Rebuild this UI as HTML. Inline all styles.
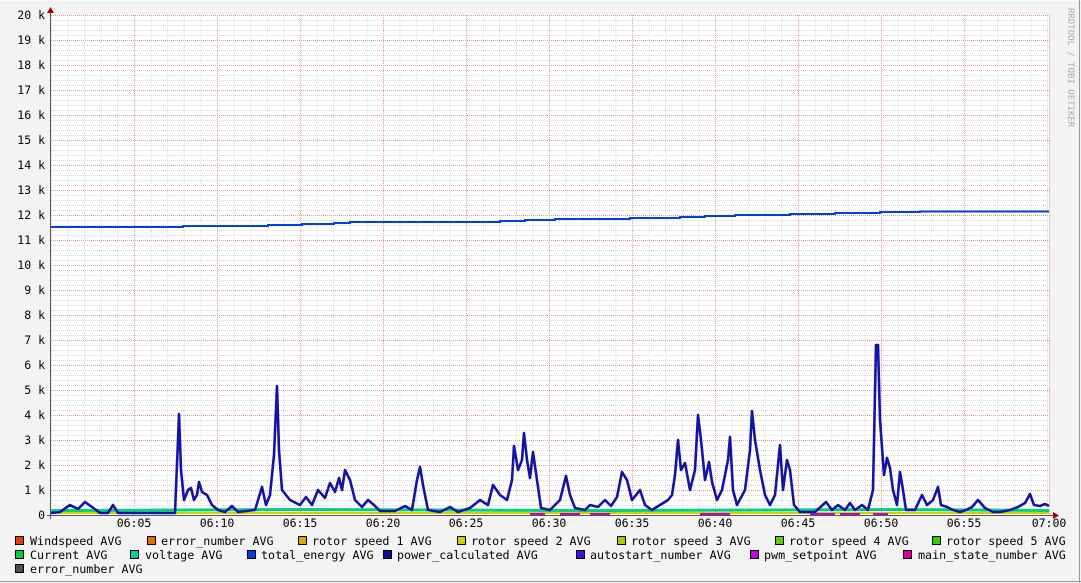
<!DOCTYPE html>
<html><head><meta charset="utf-8"><style>
html,body{margin:0;padding:0;background:#f3f3f3;}
svg{display:block;font-family:"DejaVu Sans Mono","Liberation Mono",monospace;}
</style></head><body>
<svg width="1081" height="583" xmlns="http://www.w3.org/2000/svg" shape-rendering="crispEdges">
<defs>
<pattern id="minH" x="51" y="15" width="2" height="5" patternUnits="userSpaceOnUse"><rect x="0" y="0" width="1" height="1" fill="#d8d8d8"/></pattern>
<pattern id="minV" x="51" y="15" width="16.6" height="2" patternUnits="userSpaceOnUse"><rect x="0" y="0" width="1" height="1" fill="#d8d8d8"/></pattern>
</defs>
<rect x="0" y="0" width="1081" height="583" fill="#f3f3f3"/>
<line x1="0" y1="0.5" x2="1081" y2="0.5" stroke="#fcfcfc"/>
<line x1="1079.5" y1="0" x2="1079.5" y2="583" stroke="#999"/>
<line x1="0" y1="581.5" x2="1081" y2="581.5" stroke="#999"/>
<rect x="51" y="15" width="998" height="500" fill="#fff"/>
<rect x="51" y="15" width="998" height="500" fill="url(#minH)"/>
<rect x="51" y="15" width="998" height="500" fill="url(#minV)"/>
<path stroke="#e49a9a" stroke-dasharray="1,1" fill="none" d="M51,15.5H1050M51,40.5H1050M51,65.5H1050M51,90.5H1050M51,115.5H1050M51,140.5H1050M51,165.5H1050M51,190.5H1050M51,215.5H1050M51,240.5H1050M51,265.5H1050M51,290.5H1050M51,315.5H1050M51,340.5H1050M51,365.5H1050M51,390.5H1050M51,415.5H1050M51,440.5H1050M51,465.5H1050M51,490.5H1050"/>
<path stroke="#e49a9a" stroke-dasharray="1,1" fill="none" d="M134.5,15V515M217.5,15V515M300.5,15V515M383.5,15V515M466.5,15V515M549.5,15V515M632.5,15V515M715.5,15V515M798.5,15V515M881.5,15V515M964.5,15V515M1049.5,15V515"/>
<g font-size="11.5" fill="#000" text-anchor="end" shape-rendering="auto">
<text x="45" y="19">20 k</text><text x="45" y="44">19 k</text><text x="45" y="69">18 k</text><text x="45" y="94">17 k</text><text x="45" y="119">16 k</text><text x="45" y="144">15 k</text><text x="45" y="169">14 k</text><text x="45" y="194">13 k</text><text x="45" y="219">12 k</text><text x="45" y="244">11 k</text><text x="45" y="269">10 k</text><text x="45" y="294">9 k</text><text x="45" y="319">8 k</text><text x="45" y="344">7 k</text><text x="45" y="369">6 k</text><text x="45" y="394">5 k</text><text x="45" y="419">4 k</text><text x="45" y="444">3 k</text><text x="45" y="469">2 k</text><text x="45" y="494">1 k</text><text x="45" y="519">0</text>
</g>
<g font-size="11.5" fill="#000" text-anchor="middle">
<text x="134" y="527">06:05</text><text x="217" y="527">06:10</text><text x="300" y="527">06:15</text><text x="383" y="527">06:20</text><text x="466" y="527">06:25</text><text x="549" y="527">06:30</text><text x="632" y="527">06:35</text><text x="715" y="527">06:40</text><text x="798" y="527">06:45</text><text x="881" y="527">06:50</text><text x="964" y="527">06:55</text><text x="1049" y="527">07:00</text>
</g>
<text x="1068" y="8" font-size="9" fill="#aaa" transform="rotate(90 1068 8)">RRDTOOL / TOBI OETIKER</text>
<g shape-rendering="auto">
<polyline points="51,513 1049,513" stroke="#d0d000" stroke-width="2" fill="none"/>
<polyline points="51,511 300,510 600,511 900,510 1049,511" stroke="#00d040" stroke-width="2" fill="none"/>
<polyline points="51,510 300,509 600,510 900,509 1049,510" stroke="#00d0a0" stroke-width="2" fill="none"/>
<path d="M530,514h15M560,514h20M590,514h20M700,514h30M810,514h25M840,514h20M873,514h15" stroke="#c000e0" stroke-width="2"/>
<path d="M51,227H183V226H268V225H302V224H334V223H350V222H500V221H525V220H555V219H630V218H680V217H705V216H735V215H790V214H835V213H880V212H920V211.5H1049" stroke="#0040e0" stroke-width="2" fill="none" shape-rendering="crispEdges"/>
<path d="M51,513 L60,512 L70,505 L78,509 L85,502 L92,507 L100,513 L108,513 L113,505 L118,513 L175,513 L178,440 L179,414 L181,470 L184,500 L188,490 L191,488 L194,500 L197,495 L199,482 L202,492 L207,495 L212,505 L218,510 L225,512 L232,506 L238,512 L255,510 L262,487 L266,505 L270,495 L274,455 L277,386 L279,450 L282,490 L290,500 L300,505 L306,497 L312,505 L318,490 L325,498 L330,483 L335,492 L339,478 L342,490 L345,470 L350,480 L355,500 L362,507 L368,500 L374,505 L380,511 L395,511 L405,506 L412,510 L417,480 L420,467 L423,485 L428,510 L440,512 L450,507 L458,512 L470,508 L480,500 L488,505 L493,485 L500,495 L507,500 L512,480 L514,446 L518,470 L522,460 L524,433 L527,460 L530,478 L533,452 L537,480 L541,508 L550,510 L560,500 L566,476 L570,495 L575,508 L585,510 L590,505 L598,507 L605,500 L611,506 L617,497 L622,472 L627,480 L632,500 L640,490 L645,505 L652,510 L660,505 L668,500 L672,495 L675,475 L678,440 L681,470 L685,463 L690,490 L695,470 L698,415 L701,440 L705,480 L709,462 L712,482 L717,500 L722,490 L728,460 L730,437 L733,490 L737,505 L745,490 L750,450 L752,411 L755,440 L760,470 L765,495 L770,505 L775,495 L780,445 L783,490 L787,460 L790,470 L794,505 L800,512 L815,512 L826,502 L832,510 L838,505 L845,510 L850,503 L855,510 L862,505 L868,510 L873,490 L876,345 L878,345 L880,420 L884,475 L887,458 L890,468 L893,490 L897,505 L900,472 L903,490 L906,510 L915,510 L922,495 L927,505 L933,500 L938,487 L941,505 L947,507 L953,510 L960,512 L966,510 L972,507 L978,500 L985,508 L993,512 L1000,512 L1010,510 L1018,507 L1025,503 L1030,494 L1034,505 L1040,506 L1045,504 L1049,506" stroke="#1414a4" stroke-width="2.6" fill="none" stroke-linejoin="round"/>
</g>
<line x1="50.5" y1="10" x2="50.5" y2="519" stroke="#555"/>
<line x1="47" y1="515.5" x2="1054" y2="515.5" stroke="#555"/>
<polygon points="47,13 54,13 50.5,7" fill="#a00" shape-rendering="auto"/>
<polygon points="1053,512 1053,519 1059,515.5" fill="#a00" shape-rendering="auto"/>
<g font-size="11.7" fill="#000">
<g stroke="#000" stroke-width="1">
<rect x="15.5" y="536.5" width="8" height="8" fill="#e0400f"/>
<rect x="147.5" y="536.5" width="8" height="8" fill="#e07000"/>
<rect x="298.5" y="536.5" width="8" height="8" fill="#e0a800"/>
<rect x="457.5" y="536.5" width="8" height="8" fill="#d0d000"/>
<rect x="617.5" y="536.5" width="8" height="8" fill="#a0d000"/>
<rect x="775.5" y="536.5" width="8" height="8" fill="#60d000"/>
<rect x="932.5" y="536.5" width="8" height="8" fill="#30d000"/>
<rect x="15.5" y="550.5" width="8" height="8" fill="#00d040"/>
<rect x="130.5" y="550.5" width="8" height="8" fill="#00d0a0"/>
<rect x="247.5" y="550.5" width="8" height="8" fill="#0040e0"/>
<rect x="383.5" y="550.5" width="8" height="8" fill="#101090"/>
<rect x="576.5" y="550.5" width="8" height="8" fill="#4010e0"/>
<rect x="750.5" y="550.5" width="8" height="8" fill="#c000e0"/>
<rect x="903.5" y="550.5" width="8" height="8" fill="#e000a0"/>
<rect x="15.5" y="564.5" width="8" height="8" fill="#505050"/>
</g>
<text x="30" y="545">Windspeed AVG</text>
<text x="161" y="545">error_number AVG</text>
<text x="312" y="545">rotor speed 1 AVG</text>
<text x="471" y="545">rotor speed 2 AVG</text>
<text x="631" y="545">rotor speed 3 AVG</text>
<text x="789" y="545">rotor speed 4 AVG</text>
<text x="946" y="545">rotor speed 5 AVG</text>
<text x="30" y="559">Current AVG</text>
<text x="145" y="559">voltage AVG</text>
<text x="261" y="559">total_energy AVG</text>
<text x="397" y="559">power_calculated AVG</text>
<text x="590" y="559">autostart_number AVG</text>
<text x="764" y="559">pwm_setpoint AVG</text>
<text x="918" y="559">main_state_number AVG</text>
<text x="30" y="573">error_number AVG</text>
</g>
</svg>
</body></html>
